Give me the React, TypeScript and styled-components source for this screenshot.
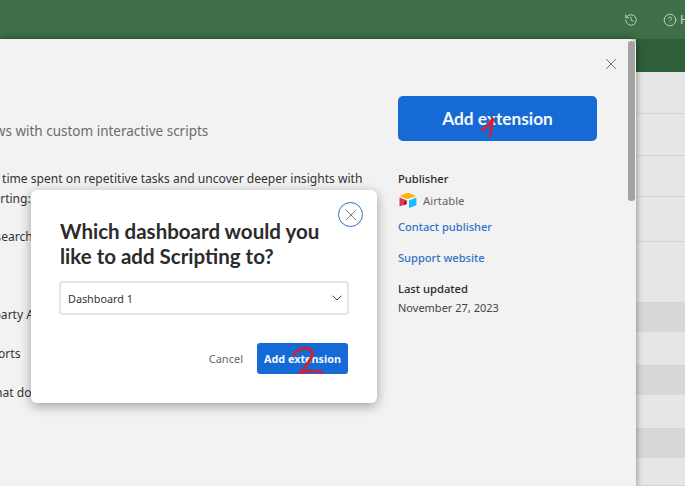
import styled, { createGlobalStyle } from "styled-components";
import { History, CircleHelp, X, ChevronDown } from "lucide-react";

const GlobalStyle = createGlobalStyle`
  html, body {
    margin: 0;
    padding: 0;
    background: #e5e5e5;
  }
`;

const bands = [
  { height: 42, dark: false },
  { height: 42, dark: false },
  { height: 41, dark: false },
  { height: 45, dark: false },
  { height: 61, dark: false },
  { height: 29, dark: true },
  { height: 34, dark: false },
  { height: 29, dark: true },
  { height: 34, dark: false },
  { height: 29, dark: true },
  { height: 28, dark: false },
];

export default function App() {
  return (
    <>
      <GlobalStyle />
      <Page>
        <TopBar>
          <TopIcon>
            <History size={14} strokeWidth={1.5} />
          </TopIcon>
          <HelpLink>
            <CircleHelp size={14} strokeWidth={1.5} />
            Help
          </HelpLink>
        </TopBar>
        <Body>
          <Panel>
            <Main>
              <Subtitle>Automate workflows with custom interactive scripts</Subtitle>
              <Paragraph>
                <Line>Reduce time spent on repetitive tasks and uncover deeper insights with</Line>
                <Line $indent={-49}>automated reporting:</Line>
              </Paragraph>
              <List>
                <Item $indent={-19}>Research</Item>
                <Item $indent={0}>&nbsp;</Item>
                <Item $indent={-40}>Third-party APIs</Item>
                <Item $indent={-68}>Custom reports</Item>
                <Item $indent={-42}>Find what do</Item>
              </List>
            </Main>
            <Side>
              <BigButton>
                Add extension
                <PenMark width="20" height="22" viewBox="0 0 20 22" $right={99} $top={20}>
                  <path
                    d="M4 14 C8 12 12 7 15 2 C14 8 13 14 12 20 M7 12 L15 4"
                    fill="none"
                    stroke="#d3202e"
                    strokeWidth="2.6"
                    strokeLinecap="round"
                  />
                </PenMark>
              </BigButton>
              <SideHeading>Publisher</SideHeading>
              <PublisherRow>
                <svg width="20" height="17" viewBox="0 0 20 17">
                  <path d="M9 1 L2.5 3.6 C2 3.9 2 4.4 2.5 4.6 L9.4 7 L17 4.4 C17.6 4.2 17.6 3.7 17 3.5 L10.5 1 Z" fill="#fcb400" />
                  <path d="M11 8.5 L18.4 5.6 V13.2 L11 16 Z" fill="#18bfff" />
                  <path d="M1.5 5.6 L8.6 8.3 V12 L1.5 14.4 Z" fill="#e2345a" />
                  <path d="M6 10 L8.6 8.5 V12 L6 13 Z" fill="#7b1f3a" />
                </svg>
                Airtable
              </PublisherRow>
              <SideLink>Contact publisher</SideLink>
              <SideLink>Support website</SideLink>
              <SideHeading $gap={8}>Last updated</SideHeading>
              <SideText>November 27, 2023</SideText>
            </Side>
            <PanelClose>
              <X size={18} strokeWidth={1.1} />
            </PanelClose>
            <ScrollThumb />
          </Panel>
          <Behind>
            <DarkStrip />
            {bands.map((band, i) => (
              <Band key={i} $height={band.height} $dark={band.dark} />
            ))}
          </Behind>
        </Body>
        <Dialog>
          <DialogClose>
            <X size={20} strokeWidth={0.9} />
          </DialogClose>
          <DialogTitle>Which dashboard would you like to add Scripting to?</DialogTitle>
          <Select>
            Dashboard 1
            <ChevronDown size={16} strokeWidth={1.4} />
          </Select>
          <DialogActions>
            <Cancel>Cancel</Cancel>
            <SmallButton>
              Add extension
              <PenMark width="34" height="28" viewBox="0 0 34 28" $right={22} $top={3}>
                <path
                  d="M2 9 C5 3 13 0 19 4 C24 9 14 20 9 26 C15 25 24 25 30 26"
                  fill="none"
                  stroke="#d3202e"
                  strokeWidth="2.8"
                  strokeLinecap="round"
                />
              </PenMark>
            </SmallButton>
          </DialogActions>
        </Dialog>
      </Page>
    </>
  );
}

const Page = styled.div`
  position: relative;
  width: 685px;
  height: 486px;
  overflow: hidden;
  display: flex;
  flex-direction: column;
  font-family: "Noto Sans", "Liberation Sans", sans-serif;
`;

const TopBar = styled.header`
  flex: none;
  height: 39px;
  box-sizing: border-box;
  background: #3e6f47;
  color: #c9d8cc;
  display: flex;
  align-items: center;
  justify-content: flex-end;
  gap: 25px;
  overflow: hidden;
`;

const TopIcon = styled.span`
  display: flex;
`;

const HelpLink = styled.span`
  display: flex;
  align-items: center;
  gap: 3px;
  width: 22px;
  font-size: 12px;

  svg {
    flex: none;
  }
`;

const Body = styled.div`
  flex: 1;
  min-height: 0;
  display: flex;
`;

const Panel = styled.section`
  position: relative;
  z-index: 1;
  flex: none;
  width: 636px;
  box-sizing: border-box;
  background: #f2f2f2;
  border-top-right-radius: 6px;
  box-shadow: 0 0 7px rgba(0, 0, 0, 0.45);
  display: flex;
  overflow: hidden;
`;

const Main = styled.div`
  flex: none;
  width: 398px;
  overflow: hidden;
  padding-top: 83px;
  box-sizing: border-box;
  white-space: nowrap;
`;

const Subtitle = styled.div`
  margin-left: -119px;
  font-size: 13.5px;
  line-height: 18px;
  color: #6b6b6b;
`;

const Paragraph = styled.div`
  margin-top: 29px;
  margin-left: -43px;
  font-size: 12.1px;
  line-height: 20px;
  color: #333;
`;

const Line = styled.div<{ $indent?: number }>`
  margin-left: ${(p) => p.$indent ?? 0}px;
`;

const List = styled.div`
  margin-top: 18px;
  font-size: 12.1px;
  color: #333;
`;

const Item = styled.div<{ $indent: number }>`
  height: 39px;
  line-height: 20px;
  margin-left: ${(p) => p.$indent}px;
`;

const Side = styled.aside`
  flex: none;
  width: 199px;
  padding-top: 57px;
  display: flex;
  flex-direction: column;
`;

const BigButton = styled.button`
  position: relative;
  height: 45px;
  margin-bottom: 30px;
  border: 0;
  border-radius: 5px;
  background: #166ad6;
  color: #f5f8fd;
  font-family: Lato, sans-serif;
  font-weight: 700;
  font-size: 17.3px;
  padding: 0;
`;

const PenMark = styled.svg<{ $right: number; $top: number }>`
  position: absolute;
  right: ${(p) => p.$right}px;
  top: ${(p) => p.$top}px;
  overflow: visible;
`;

const SideHeading = styled.div<{ $gap?: number }>`
  margin-top: ${(p) => p.$gap ?? 0}px;
  font-size: 11.2px;
  font-weight: 500;
  line-height: 16px;
  color: #2a2a2a;
`;

const PublisherRow = styled.div`
  display: flex;
  align-items: center;
  gap: 5px;
  height: 22px;
  margin-top: 2px;
  font-size: 11.3px;
  color: #666;
`;

const SideLink = styled.a`
  font-size: 11.1px;
  font-weight: 500;
  color: #2f74c6;
  line-height: 16px;
  margin-top: 8px;
  margin-bottom: 7px;
`;

const SideText = styled.div`
  font-size: 11px;
  line-height: 16px;
  margin-top: 3px;
  color: #444;
`;

const PanelClose = styled.span`
  position: absolute;
  top: 16px;
  right: 16px;
  display: flex;
  color: #555;
`;

const ScrollThumb = styled.div`
  position: absolute;
  top: 2px;
  right: 1px;
  width: 7px;
  height: 160px;
  border-radius: 3px;
  background: #a3a3a3;
`;

const Behind = styled.div`
  flex: 1;
  display: flex;
  flex-direction: column;
`;

const DarkStrip = styled.div`
  flex: none;
  height: 33px;
  background: #2f5f39;
`;

const Band = styled.div<{ $height: number; $dark: boolean }>`
  flex: none;
  box-sizing: border-box;
  height: ${(p) => p.$height}px;
  background: ${(p) => (p.$dark ? "#d8d8d8" : "#e6e6e6")};
  border-bottom: ${(p) => (p.$dark ? "0" : "1px solid #d4d4d4")};
`;

const Dialog = styled.div`
  position: absolute;
  z-index: 2;
  left: 31px;
  top: 190px;
  width: 346px;
  height: 213px;
  box-sizing: border-box;
  padding: 29px 28px 0 28px;
  background: #fff;
  border-radius: 6px;
  box-shadow: 0 3px 12px rgba(0, 0, 0, 0.35);
`;

const DialogClose = styled.span`
  position: absolute;
  top: 12px;
  right: 14px;
  width: 25px;
  height: 25px;
  box-sizing: border-box;
  border: 1px solid #2f74c6;
  border-radius: 50%;
  display: flex;
  align-items: center;
  justify-content: center;
  color: #555;
`;

const DialogTitle = styled.h2`
  margin: 0 0 0 1px;
  width: 270px;
  font-family: Lato, sans-serif;
  font-size: 20.5px;
  font-weight: 700;
  line-height: 25px;
  color: #2b2b2b;
`;

const Select = styled.div`
  margin-top: 12px;
  height: 34px;
  box-sizing: border-box;
  border: 2px solid #e6e6e6;
  border-radius: 4px;
  padding: 0 2px 0 7px;
  display: flex;
  align-items: center;
  justify-content: space-between;
  font-size: 10.8px;
  color: #333;
`;

const DialogActions = styled.div`
  margin-top: 28px;
  padding-right: 1px;
  display: flex;
  align-items: center;
  justify-content: flex-end;
  gap: 14px;
`;

const Cancel = styled.span`
  font-size: 11px;
  color: #666;
`;

const SmallButton = styled.button`
  position: relative;
  width: 91px;
  height: 31px;
  border: 0;
  border-radius: 3px;
  background: #166ad6;
  color: #f5f8fd;
  font-family: "Noto Sans", sans-serif;
  font-weight: 700;
  font-size: 10.8px;
  padding: 0;
  white-space: nowrap;
`;
